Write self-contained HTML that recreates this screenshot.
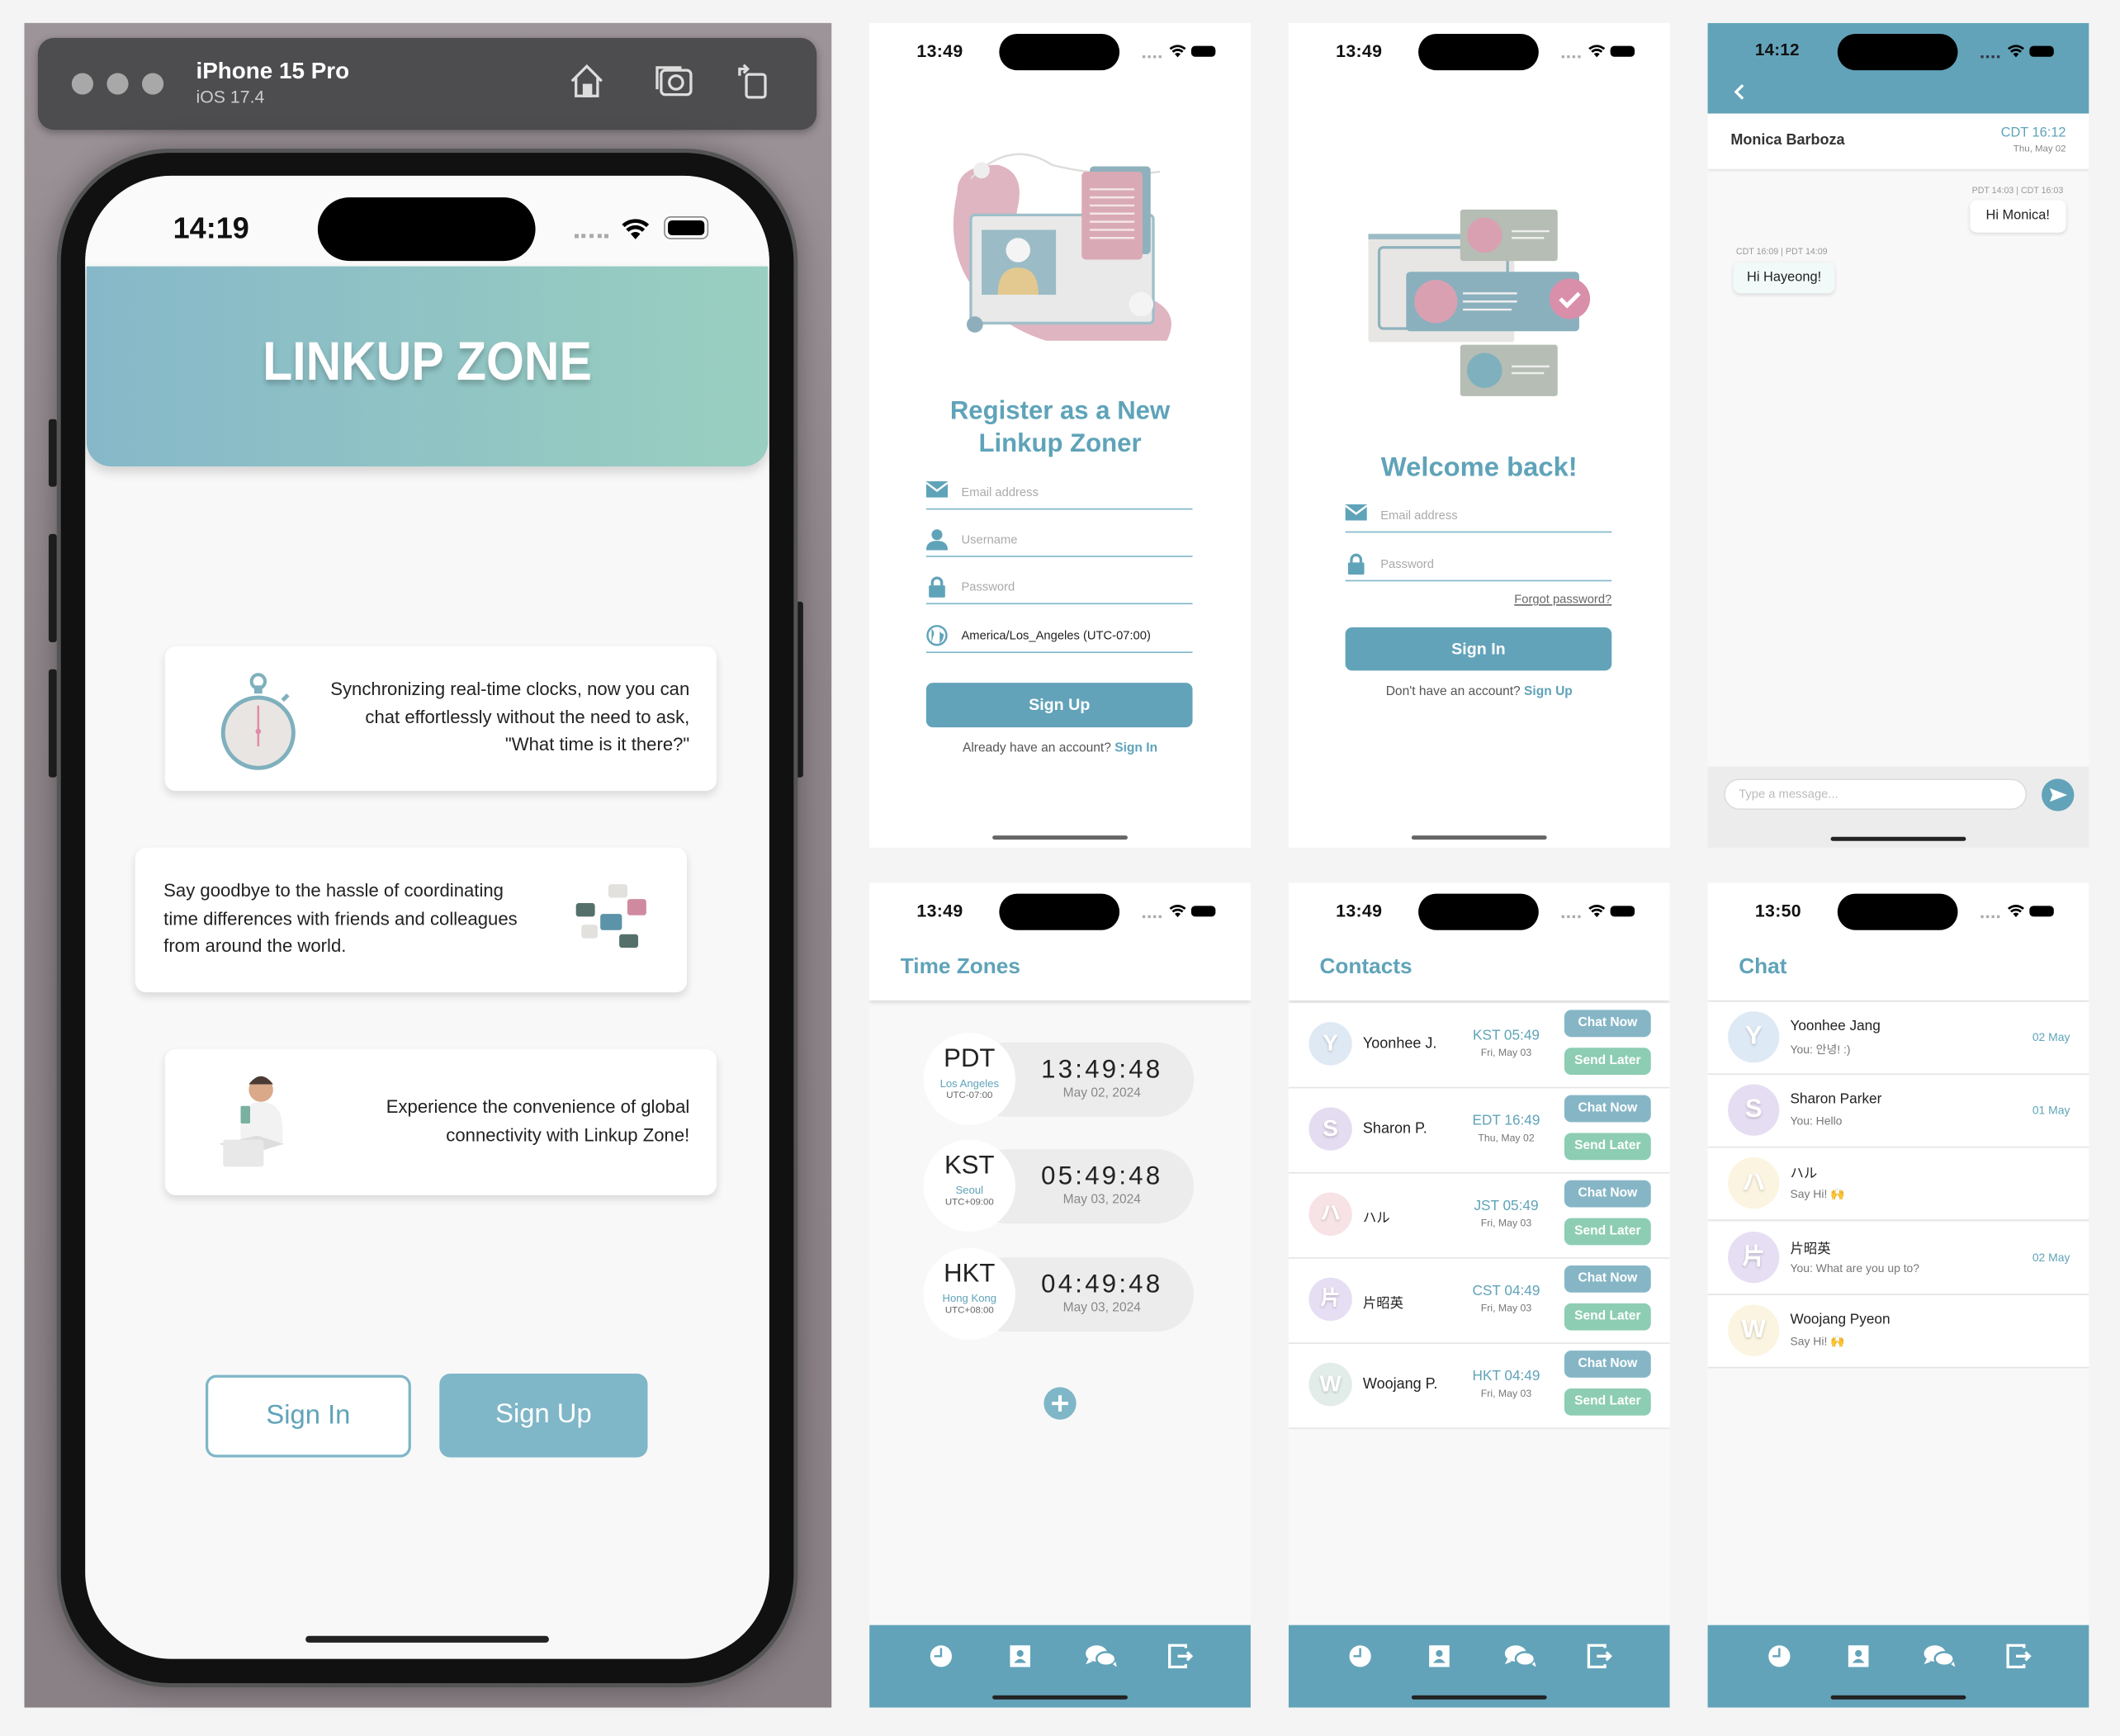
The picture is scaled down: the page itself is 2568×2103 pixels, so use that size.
<!DOCTYPE html>
<html><head><meta charset="utf-8">
<style>
*{box-sizing:border-box;margin:0;padding:0}
html,body{width:2568px;height:2102px;overflow:hidden;background:#f4f4f4}
body{font-family:"Liberation Sans","Noto Sans CJK JP",sans-serif;color:#222}
#w{position:absolute;left:0;top:0;width:1568px;height:1284px;transform:scale(1.6378);transform-origin:0 0}
.a{position:absolute}
.scr{position:absolute;background:#fff;overflow:hidden}
.tm{position:absolute;font-size:13px;font-weight:bold;color:#111;top:30px;left:35px;letter-spacing:.2px}
.pill{position:absolute;left:96px;top:8px;width:89px;height:27px;border-radius:14px;background:#000}
.dots{position:absolute;left:202px;top:24px;width:14px;border-top:2px dotted #aaa}
.bat{position:absolute;left:238px;top:17px;width:18px;height:8px;border-radius:3px;background:#000}
.wifi{position:absolute;left:221px;top:15px}
.teal{color:#5fa3b9}
.hd{position:absolute;left:0;top:0;width:282px;height:87px;background:#fff;box-shadow:0 2px 3px rgba(0,0,0,.12)}
.ttl{position:absolute;left:23px;top:54px;font-size:16px;font-weight:bold;color:#5fa3b9}
.tab{position:absolute;left:0;top:549px;width:282px;height:61px;background:#62a3b9}
.hb{position:absolute;left:91px;width:100px;height:3px;border-radius:2px;background:#222}
.fld{position:absolute;left:42px;width:197px;border-bottom:1.5px solid #7fb6c8;height:22px;font-size:9px;color:#aaa}
.fld span{position:absolute;left:26px;top:4px}
.fld svg{position:absolute;left:0;top:1px}
.btn{position:absolute;left:42px;width:197px;height:33px;border-radius:5px;background:#62a3b9;color:#fff;font-weight:bold;font-size:12px;text-align:center;line-height:33px}
.card{position:absolute;background:#fff;border-radius:8px;box-shadow:0 3px 6px rgba(0,0,0,.12);font-size:13.5px;line-height:20.5px;color:#222;white-space:nowrap}
.tz{position:absolute;left:40px;width:200px;height:68px}
.tz .c{position:absolute;left:0;top:0;width:68px;height:68px;border-radius:50%;background:#fff;text-align:center}
.tz .p{position:absolute;left:34px;top:7px;width:166px;height:55px;border-radius:28px;background:#ececec;text-align:center}
.crow{position:absolute;left:0;width:282px;height:63px;border-bottom:1px solid #e4e4e4;background:#fff}
.av{position:absolute;border-radius:50%;color:#fff;font-weight:bold;text-align:center;text-shadow:0 1px 2px rgba(0,0,0,.2)}
.cb{position:absolute;left:204px;width:64px;height:20px;border-radius:5px;color:#fff;font-weight:bold;font-size:9.5px;text-align:center;line-height:20px}
.hrow{position:absolute;left:0;width:282px;height:54px;border-bottom:1px solid #e4e4e4;background:#fff}
</style></head><body><div id="w">

<div class="a" style="left:18px;top:17px;width:597px;height:1246px;background:linear-gradient(180deg,#9d9499 0%,#8d8489 40%,#8a8186 100%)"></div>
<div class="a" style="left:28px;top:28px;width:576px;height:68px;border-radius:12px;background:#4d4c4e;box-shadow:0 2px 6px rgba(0,0,0,.3)"></div>
<div class="a" style="left:53px;top:54px;width:16px;height:16px;border-radius:50%;background:#a8a8a8"></div>
<div class="a" style="left:79px;top:54px;width:16px;height:16px;border-radius:50%;background:#a8a8a8"></div>
<div class="a" style="left:105px;top:54px;width:16px;height:16px;border-radius:50%;background:#a8a8a8"></div>
<div class="a" style="left:145px;top:43px;color:#fff;font-weight:bold;font-size:17px">iPhone 15 Pro</div>
<div class="a" style="left:145px;top:64px;color:#ccc;font-size:13px">iOS 17.4</div>
<svg class="a" style="left:420px;top:46px" width="28" height="28" viewBox="0 0 28 28" fill="none" stroke="#ddd" stroke-width="2"><path d="M3 14L14 3l11 11M6 11v14h16V11"/><rect x="12" y="17" width="5" height="8" fill="#ddd"/></svg>
<svg class="a" style="left:484px;top:46px" width="30" height="28" viewBox="0 0 30 28" fill="none" stroke="#ddd" stroke-width="2"><rect x="5" y="6" width="22" height="18" rx="3"/><path d="M2 20V4h18"/><circle cx="16" cy="15" r="5"/></svg>
<svg class="a" style="left:544px;top:46px" width="26" height="28" viewBox="0 0 26 28" fill="none" stroke="#ddd" stroke-width="2"><rect x="8" y="9" width="14" height="17" rx="2"/><path d="M3 10V5h6M6 2l3 3-3 3"/></svg>
<div class="a" style="left:36px;top:310px;width:6px;height:50px;background:#222;border-radius:2px"></div>
<div class="a" style="left:36px;top:395px;width:6px;height:80px;background:#222;border-radius:2px"></div>
<div class="a" style="left:36px;top:495px;width:6px;height:80px;background:#222;border-radius:2px"></div>
<div class="a" style="left:588px;top:445px;width:6px;height:130px;background:#222;border-radius:2px"></div>
<div class="a" style="left:42px;top:110px;width:548px;height:1138px;border-radius:84px;background:#111;border:3px solid #555;box-shadow:0 0 20px rgba(0,0,0,.35)"></div>
<div class="a" style="left:63px;top:130px;width:506px;height:1097px;border-radius:64px;background:#f8f8f8;overflow:hidden">
  <div class="a" style="left:0;top:0;width:506px;height:68px;background:#fafafa"></div>
  <div class="a" style="left:65px;top:26px;font-size:22px;font-weight:bold;color:#111">14:19</div>
  <div class="a" style="left:172px;top:16px;width:161px;height:47px;border-radius:24px;background:#000"></div>
  <div class="a" style="left:362px;top:43px;width:25px;border-top:3px dotted #aaa"></div>
  <svg class="a" style="left:396px;top:30px" width="22" height="18" viewBox="0 0 22 18"><path d="M11 17l-3.5-4a5 5 0 017 0zM4 9.5a10 10 0 0114 0l-2 2a7 7 0 00-10 0zM1 6a14.5 14.5 0 0120 0l-2 2a11.5 11.5 0 00-16 0z" fill="#000"/></svg>
  <div class="a" style="left:428px;top:30px;width:33px;height:17px;border-radius:5px;border:1.5px solid #888;padding:2px"><div style="width:100%;height:100%;border-radius:3px;background:#000"></div></div>
  <div class="a" style="left:1px;top:67px;width:504px;height:148px;border-radius:0 0 18px 18px;background:linear-gradient(90deg,#86b8c9,#99cfc0);box-shadow:0 4px 8px rgba(0,0,0,.15)"></div>
  <div class="a" style="left:0;top:116px;width:506px;text-align:center;font-size:40px;font-weight:bold;color:#fff;letter-spacing:0;transform:scaleX(.9);text-shadow:0 3px 4px rgba(0,0,0,.2)">LINKUP ZONE</div>
</div>
<div class="card" style="left:122px;top:478px;width:408px;height:107px">
  <svg class="a" style="left:38px;top:18px" width="60" height="75" viewBox="0 0 60 75"><circle cx="31" cy="8" r="5" fill="none" stroke="#7fb0bd" stroke-width="2.5"/><rect x="28" y="11" width="6" height="6" fill="#7fb0bd"/><path d="M49 22l4-4" stroke="#7fb0bd" stroke-width="3"/><circle cx="31" cy="46" r="26" fill="#e9e5e3" stroke="#7fb0bd" stroke-width="3"/><path d="M31 26v30" stroke="#e28aa8" stroke-width="1.5"/><circle cx="31" cy="45" r="2" fill="#e28aa8"/></svg>
  <div class="a" style="right:20px;top:22px;text-align:right">Synchronizing real-time clocks, now you can<br>chat effortlessly without the need to ask,<br>"What time is it there?"</div>
</div>
<div class="card" style="left:100px;top:627px;width:408px;height:107px">
  <div class="a" style="left:21px;top:22px">Say goodbye to the hassle of coordinating<br>time differences with friends and colleagues<br>from around the world.</div>
  <svg class="a" style="left:322px;top:24px" width="65" height="60" viewBox="0 0 65 60"><rect x="28" y="3" width="14" height="10" rx="2" fill="#e3e1dd"/><rect x="4" y="17" width="14" height="10" rx="2" fill="#55706a"/><rect x="42" y="14" width="14" height="12" rx="2" fill="#d08aa0"/><rect x="22" y="25" width="16" height="12" rx="2" fill="#5b93a8"/><rect x="8" y="33" width="12" height="10" rx="2" fill="#e3e1dd"/><rect x="36" y="40" width="14" height="10" rx="2" fill="#55706a"/></svg>
</div>
<div class="card" style="left:122px;top:776px;width:408px;height:108px">
  <svg class="a" style="left:38px;top:12px" width="60" height="80" viewBox="0 0 60 80"><circle cx="33" cy="18" r="9" fill="#d9a98a"/><path d="M24 14q9-12 18 0" fill="#4a3a33"/><path d="M18 45q2-18 15-18q15 0 16 18v12H18z" fill="#f2f2f2"/><rect x="18" y="30" width="7" height="13" rx="1" fill="#7ab0a0"/><path d="M2 58l28-6 20 6-26 8z" fill="#ddd"/><rect x="5" y="55" width="30" height="20" rx="2" fill="#e8e8e8"/></svg>
  <div class="a" style="right:20px;top:33px;text-align:right">Experience the convenience of global<br>connectivity with Linkup Zone!</div>
</div>
<div class="a" style="left:152px;top:1017px;width:152px;height:61px;border-radius:8px;border:2.5px solid #7fb6c8;background:#fff;color:#5fa3b9;font-size:20px;text-align:center;line-height:56px">Sign In</div>
<div class="a" style="left:325px;top:1016px;width:154px;height:62px;border-radius:8px;background:#7fb6c8;color:#fff;font-size:20px;text-align:center;line-height:60px">Sign Up</div>
<div class="a" style="left:226px;top:1210px;width:180px;height:5px;border-radius:3px;background:#222"></div>

<div class="scr" style="left:643px;top:17px;width:282px;height:610px">
  <div class="tm" style="top:13px">13:49</div><div class="pill"></div><div class="dots" style="top:24px"></div>
  <svg class="wifi" width="14" height="11" viewBox="0 0 22 18"><path d="M11 17l-3.5-4a5 5 0 017 0zM4 9.5a10 10 0 0114 0l-2 2a7 7 0 00-10 0zM1 6a14.5 14.5 0 0120 0l-2 2a11.5 11.5 0 00-16 0z" fill="#000"/></svg><div class="bat"></div>
  <svg class="a" style="left:55px;top:85px" width="180" height="150" viewBox="0 0 180 150"><path d="M10 40q0-20 30-20q20 5 15 30q-10 40 40 80q30 10 60-10q20 10 10 30q-30 15-70 5q-50-10-70-40q-25-30-15-75z" fill="#d6a2b0" opacity=".8"/><path d="M20 30q30-30 60-10q40 10 80 5" stroke="#ddd" fill="none" stroke-width="1.5"/><rect x="20" y="57" width="135" height="80" rx="3" fill="#e9e9e9" stroke="#9fbfca" stroke-width="2"/><rect x="28" y="68" width="55" height="48" fill="#9bbcc6"/><circle cx="55" cy="83" r="9" fill="#f4f4f4"/><path d="M40 116q0-20 15-20q15 0 15 20z" fill="#e3c98f"/><rect x="108" y="21" width="45" height="65" rx="3" fill="#8fb1bd"/><rect x="102" y="25" width="45" height="65" rx="3" fill="#d9aab5"/><path d="M108 38h33M108 44h33M108 50h33M108 56h33M108 62h33M108 68h33M108 74h33" stroke="#f3e6e9" stroke-width="1.5"/><circle cx="28" cy="24" r="6" fill="#eee"/><circle cx="146" cy="123" r="9" fill="#f4f4f4"/><circle cx="23" cy="138" r="6" fill="#8eaebb"/></svg>
  <div class="a" style="left:0;top:276px;width:282px;text-align:center;font-size:19px;font-weight:bold;color:#5fa3b9;line-height:24px">Register as a New<br>Linkup Zoner</div>
  <div class="fld" style="top:338px"><svg width="16" height="12" viewBox="0 0 16 12"><rect width="16" height="12" fill="#5fa3b9"/><path d="M0 1l8 6 8-6" stroke="#fff" stroke-width="1.5" fill="none"/></svg><span>Email address</span></div>
  <div class="fld" style="top:373px"><svg width="16" height="16" viewBox="0 0 16 16"><circle cx="8" cy="4.5" r="4" fill="#5fa3b9"/><path d="M0 16q0-7 8-7t8 7z" fill="#5fa3b9"/></svg><span>Username</span></div>
  <div class="fld" style="top:408px"><svg width="16" height="16" viewBox="0 0 16 16"><rect x="2" y="7" width="12" height="9" rx="1" fill="#5fa3b9"/><path d="M4.5 7V5a3.5 3.5 0 017 0v2" stroke="#5fa3b9" stroke-width="2" fill="none"/></svg><span>Password</span></div>
  <div class="fld" style="top:444px;color:#222"><svg width="16" height="16" viewBox="0 0 16 16"><circle cx="8" cy="8" r="7" fill="#fff" stroke="#5fa3b9" stroke-width="1.5"/><path d="M4 3q3 3 1 6l-1 5M10 2q-1 4 3 5q0 4-3 7" fill="#5fa3b9"/></svg><span>America/Los_Angeles (UTC-07:00)</span></div>
  <div class="btn" style="top:488px">Sign Up</div>
  <div class="a" style="left:0;top:531px;width:282px;text-align:center;font-size:9.5px;color:#555">Already have an account? <span class="teal" style="font-weight:bold">Sign In</span></div>
  <div class="hb" style="top:601px;background:#666"></div>
</div>

<div class="scr" style="left:953px;top:17px;width:282px;height:610px">
  <div class="tm" style="top:13px">13:49</div><div class="pill"></div><div class="dots"></div>
  <svg class="wifi" width="14" height="11" viewBox="0 0 22 18"><path d="M11 17l-3.5-4a5 5 0 017 0zM4 9.5a10 10 0 0114 0l-2 2a7 7 0 00-10 0zM1 6a14.5 14.5 0 0120 0l-2 2a11.5 11.5 0 00-16 0z" fill="#000"/></svg><div class="bat"></div>
  <svg class="a" style="left:57px;top:136px" width="172" height="142" viewBox="0 0 172 142"><rect x="2" y="20" width="108" height="80" rx="2" fill="#e8e6e4"/><rect x="2" y="20" width="108" height="4" fill="#9bbcc6"/><rect x="10" y="30" width="95" height="60" rx="3" fill="none" stroke="#8fb1bd" stroke-width="2"/><rect x="70" y="2" width="72" height="38" rx="2" fill="#b5bdb4"/><circle cx="88" cy="21" r="13" fill="#d9a0b2"/><path d="M108 18h28M108 23h24" stroke="#eee" stroke-width="1.5"/><rect x="30" y="48" width="128" height="44" rx="3" fill="#8ab0be"/><circle cx="52" cy="70" r="16" fill="#d9a0b2"/><path d="M72 64h40M72 70h40M72 76h36" stroke="#eee" stroke-width="1.5"/><circle cx="151" cy="68" r="15" fill="#d98fa9"/><path d="M144 68l5 5 9-9" stroke="#fff" stroke-width="3" fill="none"/><rect x="70" y="102" width="72" height="38" rx="2" fill="#b5bdb4"/><circle cx="88" cy="121" r="13" fill="#7fb0bd"/><path d="M108 118h28M108 123h24" stroke="#eee" stroke-width="1.5"/></svg>
  <div class="a" style="left:0;top:318px;width:282px;text-align:center;font-size:20px;font-weight:bold;color:#5fa3b9">Welcome back!</div>
  <div class="fld" style="top:355px"><svg width="16" height="12" viewBox="0 0 16 12"><rect width="16" height="12" fill="#5fa3b9"/><path d="M0 1l8 6 8-6" stroke="#fff" stroke-width="1.5" fill="none"/></svg><span>Email address</span></div>
  <div class="fld" style="top:391px"><svg width="16" height="16" viewBox="0 0 16 16"><rect x="2" y="7" width="12" height="9" rx="1" fill="#5fa3b9"/><path d="M4.5 7V5a3.5 3.5 0 017 0v2" stroke="#5fa3b9" stroke-width="2" fill="none"/></svg><span>Password</span></div>
  <div class="a" style="right:43px;top:421px;font-size:9px;color:#666;text-decoration:underline">Forgot password?</div>
  <div class="btn" style="top:447px;height:32px;line-height:32px">Sign In</div>
  <div class="a" style="left:0;top:489px;width:282px;text-align:center;font-size:9.5px;color:#555">Don't have an account? <span class="teal" style="font-weight:bold">Sign Up</span></div>
  <div class="hb" style="top:601px;background:#666"></div>
</div>

<div class="scr" style="left:1263px;top:17px;width:282px;height:610px;background:#f8f8f8">
  <div class="a" style="left:0;top:0;width:282px;height:67px;background:#62a3b9"></div>
  <div class="tm" style="top:13px;font-size:12.5px">14:12</div><div class="pill"></div><div class="dots" style="border-color:#334"></div>
  <svg class="wifi" width="14" height="11" viewBox="0 0 22 18"><path d="M11 17l-3.5-4a5 5 0 017 0zM4 9.5a10 10 0 0114 0l-2 2a7 7 0 00-10 0zM1 6a14.5 14.5 0 0120 0l-2 2a11.5 11.5 0 00-16 0z" fill="#000"/></svg><div class="bat"></div>
  <svg class="a" style="left:19px;top:45px" width="10" height="12" viewBox="0 0 10 12"><path d="M7 1L2 6l5 5" stroke="#fff" stroke-width="2" fill="none"/></svg>
  <div class="a" style="left:0;top:67px;width:282px;height:41px;background:#fff;box-shadow:0 1px 2px rgba(0,0,0,.1)"></div>
  <div class="a" style="left:17px;top:81px;font-size:11px;font-weight:bold;color:#333">Monica Barboza</div>
  <div class="a" style="right:17px;top:76px;text-align:right;font-size:10px;color:#5fa3b9;line-height:11px">CDT 16:12<br><span style="font-size:7px;color:#888">Thu, May 02</span></div>
  <div class="a" style="right:19px;top:121px;font-size:6.5px;color:#999">PDT 14:03 | CDT 16:03</div>
  <div class="a" style="right:17px;top:131px;height:24px;padding:0 12px;background:#fff;border-radius:5px;box-shadow:0 1px 3px rgba(0,0,0,.12);font-size:10px;line-height:24px">Hi Monica!</div>
  <div class="a" style="left:21px;top:166px;font-size:6.5px;color:#999">CDT 16:09 | PDT 14:09</div>
  <div class="a" style="left:19px;top:177px;height:23px;padding:0 10px;background:#f1faf9;border-radius:5px;box-shadow:0 1px 3px rgba(0,0,0,.12);font-size:10px;line-height:23px">Hi Hayeong!</div>
  <div class="a" style="left:0;top:550px;width:282px;height:60px;background:#ececec"></div>
  <div class="a" style="left:12px;top:559px;width:224px;height:23px;border-radius:12px;background:#fff;border:1px solid #ddd;font-size:9px;color:#bbb;line-height:21px;padding-left:10px">Type a message...</div>
  <div class="a" style="left:247px;top:559px;width:24px;height:24px;border-radius:50%;background:#62a3b9"><svg width="24" height="24" viewBox="0 0 24 24"><path d="M6 7l13 5-13 5 2-5z" fill="#fff"/></svg></div>
  <div class="hb" style="top:602px"></div>
</div>

<div class="scr" style="left:643px;top:653px;width:282px;height:610px;background:#f8f8f8">
  <div class="hd"></div>
  <div class="tm" style="top:13px">13:49</div><div class="pill"></div><div class="dots"></div>
  <svg class="wifi" width="14" height="11" viewBox="0 0 22 18"><path d="M11 17l-3.5-4a5 5 0 017 0zM4 9.5a10 10 0 0114 0l-2 2a7 7 0 00-10 0zM1 6a14.5 14.5 0 0120 0l-2 2a11.5 11.5 0 00-16 0z" fill="#000"/></svg><div class="bat"></div>
  <div class="ttl">Time Zones</div>
  <div class="tz" style="top:111px"><div class="p"><div style="margin-left:30px;font-size:19px;letter-spacing:2px;margin-top:10px">13:49:48</div><div style="margin-left:30px;font-size:9.5px;color:#888">May 02, 2024</div></div><div class="c"><div style="font-size:19px;padding-top:9px">PDT</div><div style="font-size:8px;color:#5fa3b9;margin-top:2px">Los Angeles</div><div style="font-size:7px;color:#666;margin-top:1px">UTC-07:00</div></div></div>
  <div class="tz" style="top:190px"><div class="p"><div style="margin-left:30px;font-size:19px;letter-spacing:2px;margin-top:10px">05:49:48</div><div style="margin-left:30px;font-size:9.5px;color:#888">May 03, 2024</div></div><div class="c"><div style="font-size:19px;padding-top:9px">KST</div><div style="font-size:8px;color:#5fa3b9;margin-top:2px">Seoul</div><div style="font-size:7px;color:#666;margin-top:1px">UTC+09:00</div></div></div>
  <div class="tz" style="top:270px"><div class="p"><div style="margin-left:30px;font-size:19px;letter-spacing:2px;margin-top:10px">04:49:48</div><div style="margin-left:30px;font-size:9.5px;color:#888">May 03, 2024</div></div><div class="c"><div style="font-size:19px;padding-top:9px">HKT</div><div style="font-size:8px;color:#5fa3b9;margin-top:2px">Hong Kong</div><div style="font-size:7px;color:#666;margin-top:1px">UTC+08:00</div></div></div>
  <div class="a" style="left:129px;top:373px;width:24px;height:24px;border-radius:50%;background:#7fb6c8"><svg width="24" height="24"><path d="M12 6v12M6 12h12" stroke="#fff" stroke-width="2.5"/></svg></div>
  <div class="tab"></div>
  <svg class="a" style="left:0;top:561px" width="282" height="22" viewBox="0 0 282 22"><g fill="#fff"><circle cx="53" cy="11" r="8"/><path d="M53 5v6h-5" stroke="#62a3b9" stroke-width="1.5" fill="none"/><rect x="104" y="3" width="15" height="16"/><circle cx="111.5" cy="9" r="2.5" fill="#62a3b9"/><path d="M107 16q4.5-6 9 0z" fill="#62a3b9"/><ellipse cx="168" cy="9" rx="8" ry="6"/><path d="M162 13l-2 4 5-2z"/><ellipse cx="175" cy="13" rx="7" ry="5" stroke="#62a3b9" stroke-width="1.5"/><path d="M180 17l3 2-1-4z"/></g><g stroke="#fff" stroke-width="2" fill="none"><path d="M234 5V3h-12v16h12v-2M228 11h10M235 8l3 3-3 3"/></g></svg>
  <div class="hb" style="top:601px"></div>
</div>

<div class="scr" style="left:953px;top:653px;width:282px;height:610px;background:#f8f8f8">
  <div class="hd"></div>
  <div class="tm" style="top:13px">13:49</div><div class="pill"></div><div class="dots"></div>
  <svg class="wifi" width="14" height="11" viewBox="0 0 22 18"><path d="M11 17l-3.5-4a5 5 0 017 0zM4 9.5a10 10 0 0114 0l-2 2a7 7 0 00-10 0zM1 6a14.5 14.5 0 0120 0l-2 2a11.5 11.5 0 00-16 0z" fill="#000"/></svg><div class="bat"></div>
  <div class="ttl">Contacts</div>
  <div class="crow" style="top:89px"><div class="av" style="left:15px;top:14px;width:32px;height:32px;background:#dfe9f4;font-size:17px;line-height:32px">Y</div><div class="a" style="left:55px;top:24px;font-size:11px">Yoonhee J.</div><div class="a" style="left:128px;top:18px;width:66px;text-align:center;font-size:10.5px;color:#5fa3b9;line-height:12px">KST 05:49<br><span style="font-size:7.5px;color:#777">Fri, May 03</span></div><div class="cb" style="top:5px;background:#86b6c6">Chat Now</div><div class="cb" style="top:33px;background:#8dcdb3">Send Later</div></div>
  <div class="crow" style="top:152px"><div class="av" style="left:15px;top:14px;width:32px;height:32px;background:#e4dcf0;font-size:17px;line-height:32px">S</div><div class="a" style="left:55px;top:24px;font-size:11px">Sharon P.</div><div class="a" style="left:128px;top:18px;width:66px;text-align:center;font-size:10.5px;color:#5fa3b9;line-height:12px">EDT 16:49<br><span style="font-size:7.5px;color:#777">Thu, May 02</span></div><div class="cb" style="top:5px;background:#86b6c6">Chat Now</div><div class="cb" style="top:33px;background:#8dcdb3">Send Later</div></div>
  <div class="crow" style="top:215px"><div class="av" style="left:15px;top:14px;width:32px;height:32px;background:#f7e2e6;font-size:15px;line-height:32px">ハ</div><div class="a" style="left:55px;top:24px;font-size:10px">ハル</div><div class="a" style="left:128px;top:18px;width:66px;text-align:center;font-size:10.5px;color:#5fa3b9;line-height:12px">JST 05:49<br><span style="font-size:7.5px;color:#777">Fri, May 03</span></div><div class="cb" style="top:5px;background:#86b6c6">Chat Now</div><div class="cb" style="top:33px;background:#8dcdb3">Send Later</div></div>
  <div class="crow" style="top:278px"><div class="av" style="left:15px;top:14px;width:32px;height:32px;background:#e6def3;font-size:15px;line-height:32px">片</div><div class="a" style="left:55px;top:24px;font-size:10px">片昭英</div><div class="a" style="left:128px;top:18px;width:66px;text-align:center;font-size:10.5px;color:#5fa3b9;line-height:12px">CST 04:49<br><span style="font-size:7.5px;color:#777">Fri, May 03</span></div><div class="cb" style="top:5px;background:#86b6c6">Chat Now</div><div class="cb" style="top:33px;background:#8dcdb3">Send Later</div></div>
  <div class="crow" style="top:341px"><div class="av" style="left:15px;top:14px;width:32px;height:32px;background:#e2ece9;font-size:17px;line-height:32px">W</div><div class="a" style="left:55px;top:24px;font-size:11px">Woojang P.</div><div class="a" style="left:128px;top:18px;width:66px;text-align:center;font-size:10.5px;color:#5fa3b9;line-height:12px">HKT 04:49<br><span style="font-size:7.5px;color:#777">Fri, May 03</span></div><div class="cb" style="top:5px;background:#86b6c6">Chat Now</div><div class="cb" style="top:33px;background:#8dcdb3">Send Later</div></div>
  <div class="tab"></div>
  <svg class="a" style="left:0;top:561px" width="282" height="22" viewBox="0 0 282 22"><g fill="#fff"><circle cx="53" cy="11" r="8"/><path d="M53 5v6h-5" stroke="#62a3b9" stroke-width="1.5" fill="none"/><rect x="104" y="3" width="15" height="16"/><circle cx="111.5" cy="9" r="2.5" fill="#62a3b9"/><path d="M107 16q4.5-6 9 0z" fill="#62a3b9"/><ellipse cx="168" cy="9" rx="8" ry="6"/><path d="M162 13l-2 4 5-2z"/><ellipse cx="175" cy="13" rx="7" ry="5" stroke="#62a3b9" stroke-width="1.5"/><path d="M180 17l3 2-1-4z"/></g><g stroke="#fff" stroke-width="2" fill="none"><path d="M234 5V3h-12v16h12v-2M228 11h10M235 8l3 3-3 3"/></g></svg>
  <div class="hb" style="top:601px"></div>
</div>

<div class="scr" style="left:1263px;top:653px;width:282px;height:610px;background:#f8f8f8">
  <div class="hd"></div>
  <div class="tm" style="top:13px">13:50</div><div class="pill"></div><div class="dots"></div>
  <svg class="wifi" width="14" height="11" viewBox="0 0 22 18"><path d="M11 17l-3.5-4a5 5 0 017 0zM4 9.5a10 10 0 0114 0l-2 2a7 7 0 00-10 0zM1 6a14.5 14.5 0 0120 0l-2 2a11.5 11.5 0 00-16 0z" fill="#000"/></svg><div class="bat"></div>
  <div class="ttl">Chat</div>
  <div class="hrow" style="top:88px"><div class="av" style="left:15px;top:7px;width:38px;height:38px;background:#dde9f5;font-size:19px;line-height:38px">Y</div><div class="a" style="left:61px;top:12px;font-size:10.5px">Yoonhee Jang</div><div class="a" style="left:61px;top:29px;font-size:8.5px;color:#777">You: 안녕! :)</div><div class="a" style="right:14px;top:21px;font-size:8.5px;color:#5fa3b9">02 May</div></div>
  <div class="hrow" style="top:142px"><div class="av" style="left:15px;top:7px;width:38px;height:38px;background:#e5ddf2;font-size:19px;line-height:38px">S</div><div class="a" style="left:61px;top:12px;font-size:10.5px">Sharon Parker</div><div class="a" style="left:61px;top:29px;font-size:8.5px;color:#777">You: Hello</div><div class="a" style="right:14px;top:21px;font-size:8.5px;color:#5fa3b9">01 May</div></div>
  <div class="hrow" style="top:196px"><div class="av" style="left:15px;top:7px;width:38px;height:38px;background:#fbf4e0;font-size:17px;line-height:38px">ハ</div><div class="a" style="left:61px;top:10px;font-size:10px">ハル</div><div class="a" style="left:61px;top:29px;font-size:8.5px;color:#777">Say Hi! <span style="color:#f3b73d">🙌</span></div></div>
  <div class="hrow" style="top:251px"><div class="av" style="left:15px;top:7px;width:38px;height:38px;background:#e6def3;font-size:17px;line-height:38px">片</div><div class="a" style="left:61px;top:11px;font-size:10px">片昭英</div><div class="a" style="left:61px;top:29px;font-size:8.5px;color:#777">You: What are you up to?</div><div class="a" style="right:14px;top:21px;font-size:8.5px;color:#5fa3b9">02 May</div></div>
  <div class="hrow" style="top:305px"><div class="av" style="left:15px;top:7px;width:38px;height:38px;background:#fbf4e0;font-size:19px;line-height:38px">W</div><div class="a" style="left:61px;top:12px;font-size:10.5px">Woojang Pyeon</div><div class="a" style="left:61px;top:29px;font-size:8.5px;color:#777">Say Hi! <span style="color:#f3b73d">🙌</span></div></div>
  <div class="tab"></div>
  <svg class="a" style="left:0;top:561px" width="282" height="22" viewBox="0 0 282 22"><g fill="#fff"><circle cx="53" cy="11" r="8"/><path d="M53 5v6h-5" stroke="#62a3b9" stroke-width="1.5" fill="none"/><rect x="104" y="3" width="15" height="16"/><circle cx="111.5" cy="9" r="2.5" fill="#62a3b9"/><path d="M107 16q4.5-6 9 0z" fill="#62a3b9"/><ellipse cx="168" cy="9" rx="8" ry="6"/><path d="M162 13l-2 4 5-2z"/><ellipse cx="175" cy="13" rx="7" ry="5" stroke="#62a3b9" stroke-width="1.5"/><path d="M180 17l3 2-1-4z"/></g><g stroke="#fff" stroke-width="2" fill="none"><path d="M234 5V3h-12v16h12v-2M228 11h10M235 8l3 3-3 3"/></g></svg>
  <div class="hb" style="top:601px"></div>
</div>

</div></body></html>
